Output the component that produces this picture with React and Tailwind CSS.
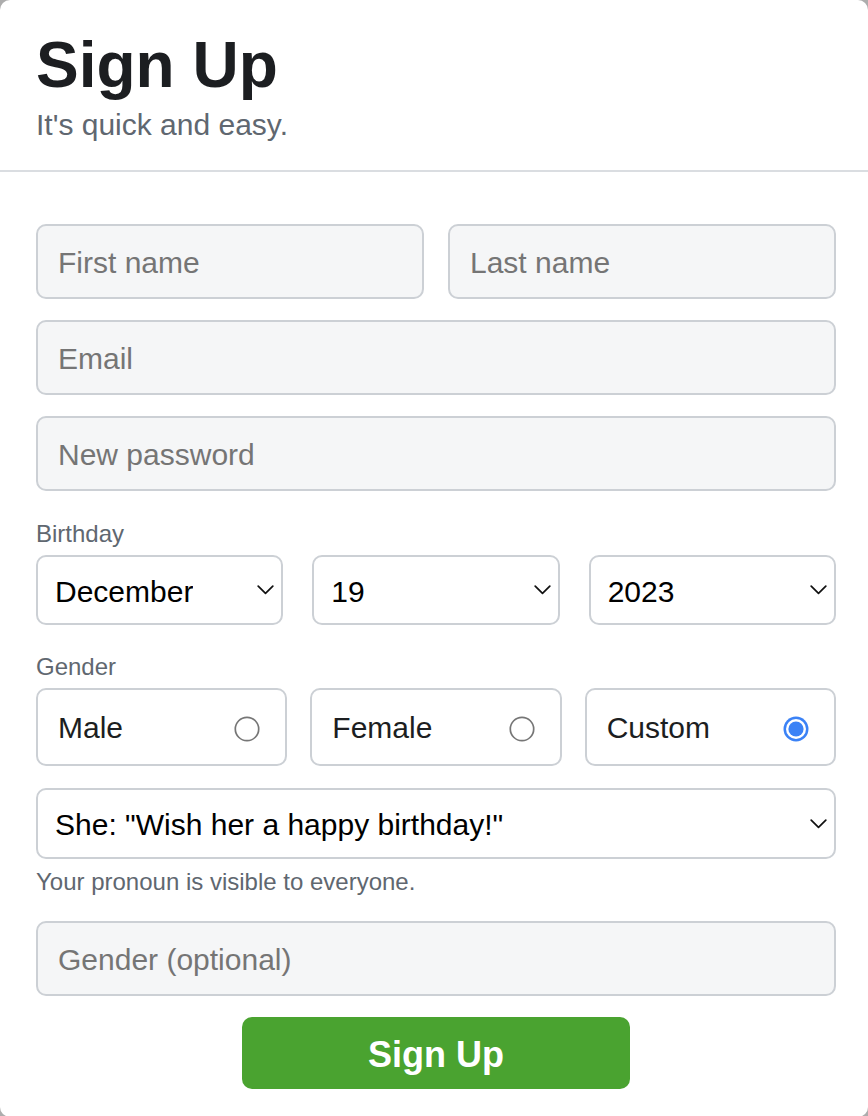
import React from "react";

const font = { fontFamily: '"Liberation Sans", Arial, Helvetica, sans-serif' };

function Chevron() {
  return (
    <svg width="17" height="10" viewBox="0 0 17 10" fill="none" className="shrink-0">
      <path d="M1.2 1.2 L8.5 8.4 L15.8 1.2" stroke="#111" strokeWidth="1.7" strokeLinecap="round" strokeLinejoin="round" />
    </svg>
  );
}

function FakeSelect({ value, className = "" }) {
  return (
    <div
      role="combobox"
      className={`flex h-[70px] items-center justify-between rounded-[10px] border-2 border-[#ccd0d5] bg-white pl-[17px] pr-[7px] text-[30px] text-black ${className}`}
    >
      <span className="truncate pt-[2px]">{value}</span>
      <Chevron />
    </div>
  );
}

function Radio({ checked }) {
  if (checked) {
    return (
      <svg width="26" height="26" viewBox="0 0 26 26" className="shrink-0">
        <circle cx="13" cy="13" r="12.5" fill="#3b82f6" />
        <circle cx="13" cy="13" r="10" fill="#fff" />
        <circle cx="13" cy="13" r="7.6" fill="#3b82f6" />
      </svg>
    );
  }
  return (
    <svg width="26" height="26" viewBox="0 0 26 26" className="shrink-0">
      <circle cx="13" cy="13" r="11.7" fill="#fff" stroke="#767676" strokeWidth="1.7" />
    </svg>
  );
}

function RadioBox({ label, checked }) {
  return (
    <label className="flex h-[78px] items-center justify-between rounded-[10px] border-2 border-[#ccd0d5] bg-white pl-[20px] pr-[25px] text-[30px] text-[#1c1e21]">
      <span className="pt-[1px]">{label}</span>
      <span className="mt-[4px]">
        <Radio checked={checked} />
      </span>
    </label>
  );
}

function TextInput({ placeholder }) {
  return (
    <input
      placeholder={placeholder}
      className="h-[75px] w-full rounded-[10px] border-2 border-[#ccd0d5] bg-[#f5f6f7] px-[20px] pt-[2px] text-[30px] text-[#1c1e21] outline-none placeholder:text-[#757575]"
    />
  );
}

export default function App() {
  return (
    <div className="min-h-screen bg-[#adadad]" style={font}>
      <div className="flex flex-col rounded-[10px] bg-white">
        <div className="border-b-2 border-[#dadde1] px-[36px] pt-[29px] pb-[27px]">
          <h1 className="text-[64px] font-bold leading-[72px] text-[#1c1e21]">Sign Up</h1>
          <p className="mt-[6px] text-[30px] leading-[36px] text-[#606770]">It's quick and easy.</p>
        </div>
        <form className="flex flex-col pl-[36px] pr-[32px] pt-[52px] pb-[28px]" onSubmit={(e) => e.preventDefault()}>
          <div className="grid grid-cols-2 gap-[24px]">
            <TextInput placeholder="First name" />
            <TextInput placeholder="Last name" />
          </div>
          <div className="mt-[21px]">
            <TextInput placeholder="Email" />
          </div>
          <div className="mt-[21px]">
            <TextInput placeholder="New password" />
          </div>
          <div className="mt-[29px] text-[24px] leading-[28px] text-[#606770]">Birthday</div>
          <div className="mt-[7px] grid grid-cols-3 gap-[29px]">
            <FakeSelect value="December" />
            <FakeSelect value="19" />
            <FakeSelect value="2023" />
          </div>
          <div className="mt-[28px] text-[24px] leading-[28px] text-[#606770]">Gender</div>
          <div className="mt-[7px] grid grid-cols-3 gap-[23px]">
            <RadioBox label="Male" />
            <RadioBox label="Female" />
            <RadioBox label="Custom" checked />
          </div>
          <FakeSelect value={'She: "Wish her a happy birthday!"'} className="mt-[22px] !h-[71px]" />
          <div className="mt-[9px] text-[24px] leading-[28px] text-[#606770]">Your pronoun is visible to everyone.</div>
          <div className="mt-[25px]">
            <TextInput placeholder="Gender (optional)" />
          </div>
          <div className="mt-[21px] flex justify-center">
            <button
              type="submit"
              className="h-[72px] w-[388px] rounded-[10px] bg-[#4aa330] pt-[3px] text-[36px] font-bold text-white"
            >
              Sign Up
            </button>
          </div>
        </form>
      </div>
    </div>
  );
}
